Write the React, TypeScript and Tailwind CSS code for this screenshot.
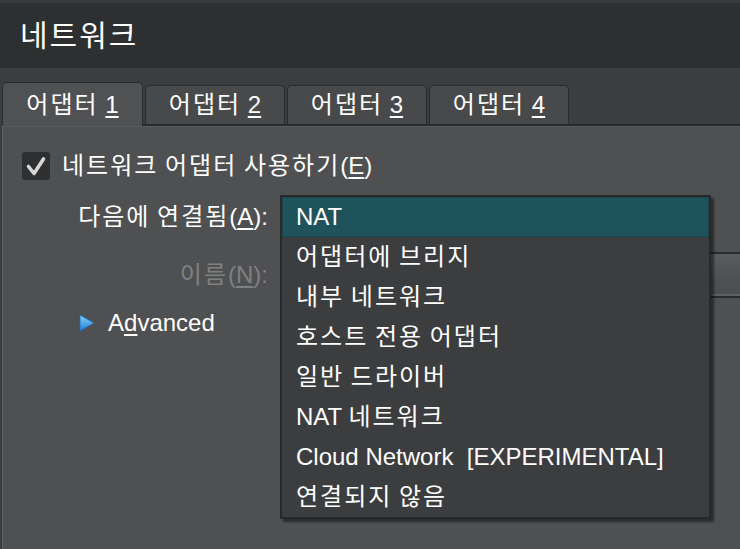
import { useState } from "react";

const FONT = { fontFamily: '"Liberation Sans", "Noto Sans CJK KR", sans-serif' };

const TABS = ["1", "2", "3", "4"];

const OPTIONS = [
  "NAT",
  "어댑터에 브리지",
  "내부 네트워크",
  "호스트 전용 어댑터",
  "일반 드라이버",
  "NAT 네트워크",
  "Cloud Network  [EXPERIMENTAL]",
  "연결되지 않음",
];

// hangul glyphs in the original are a bit wider, so space them out
function Ko({ text }: { text: string }) {
  return (
    <>
      {text.split(/([\uAC00-\uD7A3]+)/).map((part, i) =>
        /[\uAC00-\uD7A3]/.test(part) ? (
          <span key={i} className="tracking-[2px]">
            {part}
          </span>
        ) : (
          <span key={i}>{part}</span>
        )
      )}
    </>
  );
}

function Check() {
  return (
    <svg width="28" height="28" viewBox="0 0 28 28">
      <path
        d="M6.5 14.5 L12 21.5 L21.5 7"
        fill="none"
        stroke="#d6d6d6"
        strokeWidth="3.6"
        strokeLinecap="round"
        strokeLinejoin="round"
      />
    </svg>
  );
}

function Triangle() {
  return (
    <svg width="16" height="18" viewBox="0 0 16 18">
      <defs>
        <linearGradient id="tri" x1="0" y1="0" x2="0" y2="1">
          <stop offset="0" stopColor="#8ad0f7" />
          <stop offset="1" stopColor="#1f7fd6" />
        </linearGradient>
      </defs>
      <path d="M1 1 L15 9 L1 17 Z" fill="url(#tri)" stroke="#1a6fc0" strokeWidth="0.8" />
    </svg>
  );
}

export default function App() {
  const [active, setActive] = useState(0);
  const [selected, setSelected] = useState(0);

  return (
    <div
      className="relative w-[740px] h-[549px] overflow-hidden bg-[#3c3d3f] text-white flex flex-col"
      style={FONT}
    >
      {/* Title */}
      <div className="h-[3px] bg-[#393a3c]" />
      <div className="h-[65px] shrink-0 bg-[#2e2f31] flex items-center pl-[20px] text-[30px] tracking-[2px] leading-none">
        네트워크
      </div>

      {/* Tabs */}
      <div className="flex items-end gap-[2px] pl-[2px] pt-[14px] relative z-10">
        {TABS.map((n, i) => (
          <button
            key={n}
            type="button"
            onClick={() => setActive(i)}
            className={
              i === active
                ? "w-[141px] h-[44px] -mb-[2px] rounded-t-[5px] border border-b-0 border-[#2a2b2d] bg-[#505153] text-[24px] leading-none"
                : "w-[140px] h-[39px] rounded-t-[5px] border border-b-0 border-[#2a2b2d] bg-[#48494b] text-[24px] leading-none"
            }
          >
            <span className="tracking-[2px]">어댑터</span>{" "}
            <span className="underline underline-offset-[3px]">{n}</span>
          </button>
        ))}
      </div>

      {/* Panel */}
      <div className="flex-1 ml-[2px] border-t-2 border-[#2a2b2d] bg-[#4f5052]">
        <div className="h-full border-l border-t border-l-[#606163] border-t-[#58595b] pl-[19px] pt-[25px] flex flex-col">
          <div className="flex items-center gap-[12px] h-[28px]">
            <div className="w-[28px] h-[28px] rounded-[3px] bg-[#2e2f31] flex items-center justify-center">
              <Check />
            </div>
            <span className="text-[24px] leading-none">
              <Ko text="네트워크 어댑터 사용하기" />(
              <span className="underline underline-offset-[3px]">E</span>)
            </span>
          </div>

          <div className="grid grid-cols-[246px_1fr] gap-x-[12px] mt-[17px]">
            <div className="h-[40px] flex items-center justify-end text-[24px] leading-none">
              <span>
                <Ko text="다음에 연결됨" />(
                <span className="underline underline-offset-[3px]">A</span>):
              </span>
            </div>
            <div className="h-[40px] w-[431px] bg-[#3c3d3f]" />

            <div className="mt-[15px] h-[46px] flex items-center justify-end text-[24px] leading-none text-[#7f8082]">
              <span>
                <Ko text="이름" />(
                <span className="underline underline-offset-[3px]">N</span>):
              </span>
            </div>
            <div className="mt-[15px] h-[46px] w-[480px] border-y-2 border-[#2a2b2d] bg-gradient-to-b from-[#5b5c5e] via-[#505153] to-[#4c4d4f]">
              <div className="h-full border-b-2 border-[#5e5f61]" />
            </div>
          </div>

          <div className="mt-[14px] h-[22px] flex items-center pl-[57px] gap-[13px]">
            <Triangle />
            <span className="text-[24px] leading-none">
              A<span className="underline underline-offset-[3px]">d</span>vanced
            </span>
          </div>
        </div>
      </div>

      {/* Popup list */}
      <div className="absolute left-[280px] top-[195px] w-[431px] border-2 border-[#27282a] bg-[#3c3d3f] shadow-[3px_3px_2px_rgba(0,0,0,0.45)] z-20">
        {OPTIONS.map((o, i) => (
          <div
            key={o}
            onClick={() => setSelected(i)}
            className={
              i === selected
                ? "h-[40px] flex items-center pl-[13px] border border-[#1a464e] bg-[#1f535c] text-[24px] leading-none whitespace-pre"
                : "h-[40px] flex items-center pl-[14px] text-[24px] leading-none whitespace-pre"
            }
          >
            <Ko text={o} />
          </div>
        ))}
      </div>
    </div>
  );
}
